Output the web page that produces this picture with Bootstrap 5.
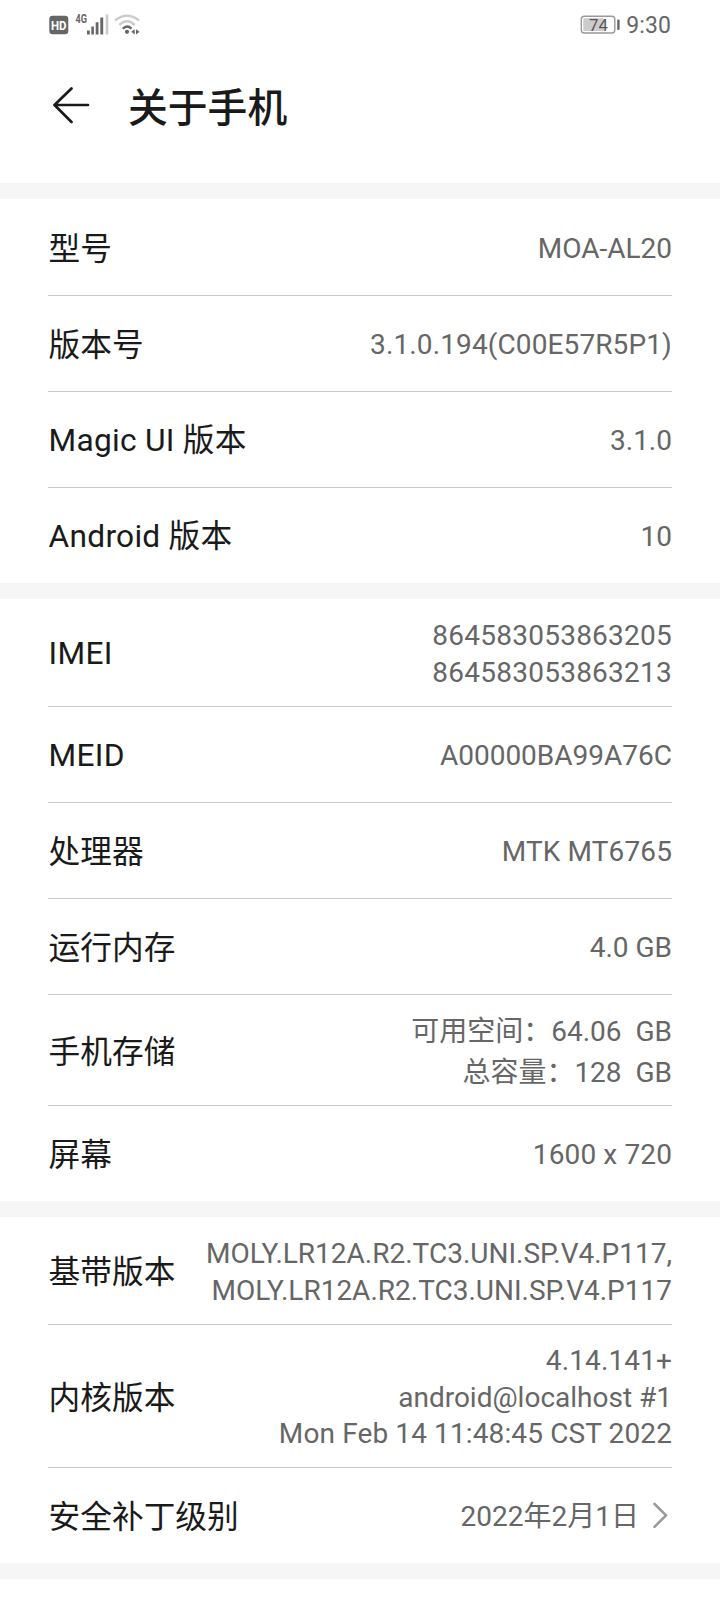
<!DOCTYPE html>
<html lang="zh-CN">
<head>
<meta charset="utf-8">
<meta name="viewport" content="width=device-width, initial-scale=1">
<title>关于手机</title>
<link href="https://cdn.jsdelivr.net/npm/bootstrap@5.3.0/dist/css/bootstrap.min.css" rel="stylesheet">
<style>
body{font-family:Roboto,"Noto Sans CJK SC",sans-serif;background:#fff;color:#1a1a1a}
.status-bar{height:49px;padding:0 49px;color:#666}
.clock{font-size:23px;line-height:28px;padding-top:2px;margin-left:6px;letter-spacing:.1px}
.title-bar{height:134px;padding:34px 48px 0 52px}
.title-bar h1{font-size:39.8px;line-height:48px;font-weight:500;margin-left:36px;padding-top:2px}
.group-gap{height:16px;background:#f6f6f6}
.info-row{margin:0 48px;height:96px;border-bottom:1px solid #c9c9c9}
.info-row:last-child{height:95px;border-color:transparent}
.row-first{height:97px}
.row-two{height:108px}
.row-storage{height:111px}
.row-three{height:143px}
.info-key{font-size:31.7px;line-height:44px;white-space:nowrap;padding:5px 0 0 .6px}
.key-latin{letter-spacing:.25px;padding-top:3px}
.info-val{font-size:28px;line-height:36.7px;color:#666;text-align:right;white-space:pre;padding-top:4px}
.row-storage .info-val{line-height:41px;padding-top:3px}
.val-wide{letter-spacing:.24px}
.val-mid{letter-spacing:.12px}
.chevron{margin-left:13px}
</style>
</head>
<body>
<header>
<div class="status-bar d-flex align-items-center justify-content-between">
<svg width="92" height="28" viewBox="0 0 92 28" aria-hidden="true">
<rect x="0.300" y="4.800" width="19" height="18.500" rx="3.200" fill="#666"/>
<text x="9.800" y="19" font-size="13.500" font-weight="700" fill="#fff" text-anchor="middle" textLength="15.500" lengthAdjust="spacingAndGlyphs">HD</text>
<text x="26.500" y="12" font-size="12" font-weight="700" fill="#666" textLength="11.500" lengthAdjust="spacingAndGlyphs">4G</text>
<path fill="#666" d="M38 19.500h2.800v4H38zM42.300 15.500h2.600v8h-2.600zM46.700 11.300h2.800v12.200h-2.800zM51.300 6.500h2.900v17h-2.900z"/>
<path fill="#ccc" d="M56.600 3.500h2.700v20h-2.700z"/>
<g fill="none" stroke-width="2.400"><path stroke="#ccc" d="M66 9.500Q78 .200 90 9.500M70.300 14Q78 6.700 85.800 14"/><path stroke="#666" d="M73.800 17.800Q78 13.300 82.500 17.600"/></g>
<circle cx="78" cy="20.800" r="2.100" fill="#666"/>
<path fill="#666" d="M85.700 18.200v5.200l-3.500-2.600zM87 18.200v5.200l3.500-2.600z"/>
</svg>
<div class="d-flex align-items-center">
<svg width="40" height="22" viewBox="0 0 40 22" aria-hidden="true">
<rect x="1.300" y="2.200" width="33.500" height="16.800" rx="3" fill="#fff" stroke="#999" stroke-width="1.400"/>
<path fill="#ccc" d="M3.300 4.200h20.500v12.800H3.300z"/>
<text x="18.500" y="16.500" font-size="16.800" fill="#555" text-anchor="middle">74</text>
<rect x="37.200" y="5.500" width="2.400" height="10.500" rx="1" fill="#666"/>
</svg>
<span class="clock">9:30</span>
</div>
</div>
<div class="title-bar d-flex align-items-start">
<svg class="mt-1" width="40" height="40" viewBox="0 0 40 40" fill="none" stroke="#1a1a1a" stroke-width="2.700" stroke-linecap="round" stroke-linejoin="round" aria-label="返回"><path d="M19.500 1.500L2.500 18l17 17M3 18h33"/></svg>
<h1 class="mb-0">关于手机</h1>
</div>
</header>
<main>
<div class="group-gap"></div>
<section>
<div class="info-row row-first d-flex align-items-center justify-content-between"><div class="info-key">型号</div><div class="info-val">MOA-AL20</div></div>
<div class="info-row d-flex align-items-center justify-content-between"><div class="info-key">版本号</div><div class="info-val val-mid">3.1.0.194(C00E57R5P1)</div></div>
<div class="info-row d-flex align-items-center justify-content-between"><div class="info-key key-latin">Magic UI 版本</div><div class="info-val">3.1.0</div></div>
<div class="info-row d-flex align-items-center justify-content-between"><div class="info-key key-latin">Android 版本</div><div class="info-val">10</div></div>
</section>
<div class="group-gap"></div>
<section>
<div class="info-row row-two d-flex align-items-center justify-content-between"><div class="info-key key-latin">IMEI</div><div class="info-val val-wide">864583053863205<br>864583053863213</div></div>
<div class="info-row d-flex align-items-center justify-content-between"><div class="info-key key-latin">MEID</div><div class="info-val">A00000BA99A76C</div></div>
<div class="info-row d-flex align-items-center justify-content-between"><div class="info-key">处理器</div><div class="info-val val-mid">MTK MT6765</div></div>
<div class="info-row d-flex align-items-center justify-content-between"><div class="info-key">运行内存</div><div class="info-val">4.0 GB</div></div>
<div class="info-row row-storage d-flex align-items-center justify-content-between"><div class="info-key">手机存储</div><div class="info-val">可用空间：64.06  GB<br>总容量：128  GB</div></div>
<div class="info-row d-flex align-items-center justify-content-between"><div class="info-key">屏幕</div><div class="info-val val-mid">1600 x 720</div></div>
</section>
<div class="group-gap"></div>
<section>
<div class="info-row row-two d-flex align-items-center justify-content-between"><div class="info-key">基带版本</div><div class="info-val">MOLY.LR12A.R2.TC3.UNI.SP.V4.P117,<br>MOLY.LR12A.R2.TC3.UNI.SP.V4.P117</div></div>
<div class="info-row row-three d-flex align-items-center justify-content-between"><div class="info-key">内核版本</div><div class="info-val"><span class="val-mid">4.14.141+</span><br>android@localhost #1<br><span class="val-mid">Mon Feb 14 11:48:45 CST 2022</span></div></div>
<div class="info-row d-flex align-items-center justify-content-between"><div class="info-key">安全补丁级别</div><div class="d-flex align-items-center"><div class="info-val">2022年2月1日</div><svg class="chevron" width="20" height="28" viewBox="0 0 20 28" fill="none" stroke="#999" stroke-width="2.600" stroke-linecap="round" stroke-linejoin="round" aria-hidden="true"><path d="M2.500 2.800L14 14.300 2.500 25.800"/></svg></div></div>
</section>
<div class="group-gap"></div>
</main>
<script src="https://cdn.jsdelivr.net/npm/bootstrap@5.3.0/dist/js/bootstrap.bundle.min.js"></script>
</body>
</html>
